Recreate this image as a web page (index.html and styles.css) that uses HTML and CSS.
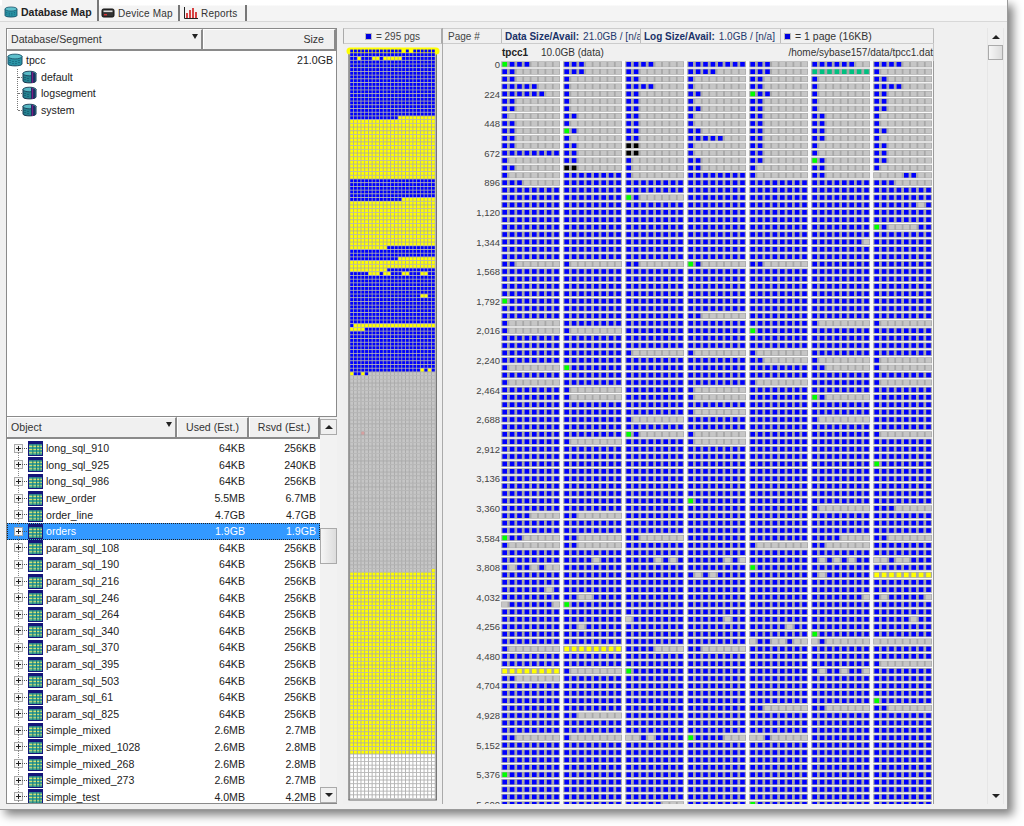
FILE: index.html
```html
<!DOCTYPE html>
<html lang="en">
<head>
<meta charset="utf-8">
<title>Database Map</title>
<link rel="stylesheet" href="styles.css">
</head>
<body>
<svg class="defs" width="0" height="0" aria-hidden="true">
  <symbol id="ic-table" viewBox="0 0 14 14">
    <rect x="0" y="0" width="14" height="14" fill="#15157a"/>
    <rect x="1" y="3" width="12" height="10" fill="#3fa59a"/>
    <path d="M1 5h12M1 8h12M1 11h12" stroke="#d8e070" stroke-width="1"/>
    <path d="M4.5 3v10M8 3v10M11 3v10" stroke="#1d7d72" stroke-width="1"/>
  </symbol>
  <symbol id="ic-db" viewBox="0 0 16 14">
    <path d="M1 3.5C1 1.5 15 1.5 15 3.5V11C15 13.5 1 13.5 1 11Z" fill="#2a93a5" stroke="#1b4f66"/>
    <ellipse cx="8" cy="3.5" rx="7" ry="2.4" fill="#5fc0cc" stroke="#1b4f66" stroke-width=".8"/>
    <path d="M3 7v4M6 8v4M9 8v4M12 7v4" stroke="#17677c" stroke-width="1.4" stroke-dasharray="1 1"/>
  </symbol>
  <symbol id="ic-seg" viewBox="0 0 15 14">
    <path d="M1 3.5C1 1.5 14 1.5 14 3.5V11C14 13.5 1 13.5 1 11Z" fill="#24808f" stroke="#17354e"/>
    <ellipse cx="7.5" cy="3.5" rx="6.5" ry="2.3" fill="#58b8c4" stroke="#17354e" stroke-width=".8"/>
    <path d="M9 1.5L13 3V12L9 13Z" fill="#1c2f63"/>
    <path d="M10.5 2v11" stroke="#7a1f80" stroke-width="1.2"/>
    <path d="M3 7v4M6 8v4" stroke="#14596c" stroke-width="1.4" stroke-dasharray="1 1"/>
  </symbol>
  <symbol id="ic-device" viewBox="0 0 14 12">
    <rect x="1" y="2" width="12" height="8" rx="1.5" fill="#333" stroke="#111"/>
    <rect x="2.5" y="3.5" width="9" height="1.6" fill="#ddd"/>
    <rect x="3" y="7" width="3" height="1.4" fill="#d33"/>
  </symbol>
  <symbol id="ic-chart" viewBox="0 0 14 12">
    <path d="M.5 0V11.5H14" fill="none" stroke="#222"/>
    <path d="M3 11V6M6 11V3M9 11V1M12 11V5" stroke="#d01818" stroke-width="1.6"/>
  </symbol>
</svg>
<div class="window">
  <nav class="tabs">
    <div class="tab tab-active"><svg class="ic-tab"><use href="#ic-db"/></svg>Database Map</div>
    <div class="tab tab-device"><svg class="ic-tab"><use href="#ic-device"/></svg>Device Map</div>
    <div class="tab tab-reports"><svg class="ic-tab"><use href="#ic-chart"/></svg>Reports</div>
  </nav>
  <div class="panes">
    <section class="left">
      <div class="tree-panel">
        <div class="head tree-head">
          <div class="hcell hcell-grow">Database/Segment<i class="sort"></i></div>
          <div class="hcell hcell-size">Size</div>
        </div>
        <div class="tree">
          <div class="tree-row"><svg class="ic-db"><use href="#ic-db"/></svg><span class="grow">tpcc</span><span class="tree-size">21.0GB</span></div>
          <div class="tree-kids">
            <div class="tree-row kid"><svg class="ic-seg"><use href="#ic-seg"/></svg><span>default</span></div>
            <div class="tree-row kid"><svg class="ic-seg"><use href="#ic-seg"/></svg><span>logsegment</span></div>
            <div class="tree-row kid"><svg class="ic-seg"><use href="#ic-seg"/></svg><span>system</span></div>
          </div>
        </div>
      </div>
      <div class="obj-panel">
        <div class="obj-main">
          <div class="head obj-head">
            <div class="hcell hcell-grow">Object<i class="sort"></i></div>
            <div class="hcell hcell-used">Used (Est.)</div>
            <div class="hcell hcell-rsvd">Rsvd (Est.)</div>
          </div>
          <div class="rows">
            <div class="row"><i class="tog"></i><svg class="ic-table"><use href="#ic-table"/></svg><span class="name">long_sql_910</span><span class="num">64KB</span><span class="num">256KB</span></div>
            <div class="row"><i class="tog"></i><svg class="ic-table"><use href="#ic-table"/></svg><span class="name">long_sql_925</span><span class="num">64KB</span><span class="num">240KB</span></div>
            <div class="row"><i class="tog"></i><svg class="ic-table"><use href="#ic-table"/></svg><span class="name">long_sql_986</span><span class="num">64KB</span><span class="num">256KB</span></div>
            <div class="row"><i class="tog"></i><svg class="ic-table"><use href="#ic-table"/></svg><span class="name">new_order</span><span class="num">5.5MB</span><span class="num">6.7MB</span></div>
            <div class="row"><i class="tog"></i><svg class="ic-table"><use href="#ic-table"/></svg><span class="name">order_line</span><span class="num">4.7GB</span><span class="num">4.7GB</span></div>
            <div class="row row-sel"><i class="tog"></i><svg class="ic-table"><use href="#ic-table"/></svg><span class="name">orders</span><span class="num">1.9GB</span><span class="num">1.9GB</span></div>
            <div class="row"><i class="tog"></i><svg class="ic-table"><use href="#ic-table"/></svg><span class="name">param_sql_108</span><span class="num">64KB</span><span class="num">256KB</span></div>
            <div class="row"><i class="tog"></i><svg class="ic-table"><use href="#ic-table"/></svg><span class="name">param_sql_190</span><span class="num">64KB</span><span class="num">256KB</span></div>
            <div class="row"><i class="tog"></i><svg class="ic-table"><use href="#ic-table"/></svg><span class="name">param_sql_216</span><span class="num">64KB</span><span class="num">256KB</span></div>
            <div class="row"><i class="tog"></i><svg class="ic-table"><use href="#ic-table"/></svg><span class="name">param_sql_246</span><span class="num">64KB</span><span class="num">256KB</span></div>
            <div class="row"><i class="tog"></i><svg class="ic-table"><use href="#ic-table"/></svg><span class="name">param_sql_264</span><span class="num">64KB</span><span class="num">256KB</span></div>
            <div class="row"><i class="tog"></i><svg class="ic-table"><use href="#ic-table"/></svg><span class="name">param_sql_340</span><span class="num">64KB</span><span class="num">256KB</span></div>
            <div class="row"><i class="tog"></i><svg class="ic-table"><use href="#ic-table"/></svg><span class="name">param_sql_370</span><span class="num">64KB</span><span class="num">256KB</span></div>
            <div class="row"><i class="tog"></i><svg class="ic-table"><use href="#ic-table"/></svg><span class="name">param_sql_395</span><span class="num">64KB</span><span class="num">256KB</span></div>
            <div class="row"><i class="tog"></i><svg class="ic-table"><use href="#ic-table"/></svg><span class="name">param_sql_503</span><span class="num">64KB</span><span class="num">256KB</span></div>
            <div class="row"><i class="tog"></i><svg class="ic-table"><use href="#ic-table"/></svg><span class="name">param_sql_61</span><span class="num">64KB</span><span class="num">256KB</span></div>
            <div class="row"><i class="tog"></i><svg class="ic-table"><use href="#ic-table"/></svg><span class="name">param_sql_825</span><span class="num">64KB</span><span class="num">256KB</span></div>
            <div class="row"><i class="tog"></i><svg class="ic-table"><use href="#ic-table"/></svg><span class="name">simple_mixed</span><span class="num">2.6MB</span><span class="num">2.7MB</span></div>
            <div class="row"><i class="tog"></i><svg class="ic-table"><use href="#ic-table"/></svg><span class="name">simple_mixed_1028</span><span class="num">2.6MB</span><span class="num">2.8MB</span></div>
            <div class="row"><i class="tog"></i><svg class="ic-table"><use href="#ic-table"/></svg><span class="name">simple_mixed_268</span><span class="num">2.6MB</span><span class="num">2.8MB</span></div>
            <div class="row"><i class="tog"></i><svg class="ic-table"><use href="#ic-table"/></svg><span class="name">simple_mixed_273</span><span class="num">2.6MB</span><span class="num">2.7MB</span></div>
            <div class="row"><i class="tog"></i><svg class="ic-table"><use href="#ic-table"/></svg><span class="name">simple_test</span><span class="num">4.0MB</span><span class="num">4.2MB</span></div>
          </div>
        </div>
        <div class="sbar sbar-list">
          <div class="sbtn"><i class="arrow-up"></i></div>
          <div class="strack strack-a"></div>
          <div class="sthumb sthumb-list"></div>
          <div class="strack"></div>
          <div class="sbtn"><i class="arrow-down"></i></div>
        </div>
      </div>
    </section>
    <section class="mini">
      <div class="mini-head"><i class="swatch"></i> = 295 pgs</div>
      <canvas id="mini" class="mini-map" width="98" height="760"></canvas>
    </section>
    <section class="main">
      <div class="main-head">
        <div class="mh mh-page">Page #</div>
        <div class="mh mh-data"><b>Data Size/Avail:</b> 21.0GB / [n/a]</div>
        <div class="mh mh-log"><b>Log Size/Avail:</b> 1.0GB / [n/a]</div>
        <div class="mh mh-legend"><i class="swatch"></i> = 1 page (16KB)</div>
      </div>
      <div class="main-sub">
        <b class="dev">tpcc1</b><span class="dev-size">10.0GB (data)</span><span class="dev-path">/home/sybase157/data/tpcc1.dat</span>
      </div>
      <div class="main-body">
        <div class="labels">
          <div>0</div><div>224</div><div>448</div><div>672</div><div>896</div><div>1,120</div><div>1,344</div><div>1,568</div><div>1,792</div><div>2,016</div><div>2,240</div><div>2,464</div><div>2,688</div><div>2,912</div><div>3,136</div><div>3,360</div><div>3,584</div><div>3,808</div><div>4,032</div><div>4,256</div><div>4,480</div><div>4,704</div><div>4,928</div><div>5,152</div><div>5,376</div><div>5,600</div>
        </div>
        <canvas id="grid" class="grid" width="433" height="744"></canvas>
      </div>
    </section>
    <div class="sbar sbar-page">
      <div class="sbtn-flat"><i class="arrow-up"></i></div>
      <div class="sthumb sthumb-page"></div>
      <div class="strack"></div>
      <div class="sbtn-flat"><i class="arrow-down"></i></div>
    </div>
  </div>
</div>
<script src="map.js"></script>
</body>
</html>
```
FILE: styles.css
```css
* { box-sizing: border-box; }
html, body { margin: 0; padding: 0; background: #fff; }
body { width: 1024px; height: 826px; overflow: hidden; font-family: "Liberation Sans", "Noto Sans", sans-serif; font-size: 10.6px; color: #222; }
.defs { position: absolute; }
i { display: block; font-style: normal; }

.window { width: 1008px; height: 810px; background: #f0f0f0; border-right: 1px solid #9a9a9a; border-bottom: 1px solid #9a9a9a; box-shadow: 5px 5px 9px rgba(0,0,0,.5); display: flex; flex-direction: column; overflow: hidden; }

.tabs { height: 22px; flex: none; display: flex; align-items: flex-end; padding-left: 2px; background: linear-gradient(#fff 0, #fff 5px, #f4f4f4 6px); border-bottom: 1px solid #d8d8d8; font-size: 10px; color: #333; }
.tab { height: 16px; display: flex; align-items: center; gap: 3px; border-right: 2px solid #777; padding-left: 2px; letter-spacing: .2px; }
.tab-active { width: 97px; height: 21px; padding-top: 3px; font-size: 10.5px; font-weight: 700; background: #f3f3f3; color: #222; letter-spacing: 0; }
.tab-device { width: 81px; }
.tab-reports { width: 67px; padding-left: 4px; }
.ic-tab { width: 14px; height: 12px; flex: none; }

.panes { flex: 1; min-height: 0; display: flex; padding: 6px 3px 5px 6px; }

.left { width: 331px; flex: none; display: flex; flex-direction: column; border-left: 1px solid #8a8a8a; border-bottom: 1px solid #8a8a8a; }
.tree-panel { height: 388px; flex: none; display: flex; flex-direction: column; border-right: 1px solid #8a8a8a; border-top: 1px solid #8a8a8a; }
.head { display: flex; flex: none; height: 22px; background: #f0f0f0; border-bottom: 2px solid #8a8a8a; color: #333; }
.hcell { display: flex; align-items: center; padding: 0 0 2px 3px; border-right: 2px solid #8a8a8a; border-top: 1px solid #fff; border-left: 1px solid #fff; }
.hcell-grow { flex: 1; min-width: 0; justify-content: space-between; padding-right: 3px; }
.hcell-size { width: 133px; justify-content: flex-end; padding-right: 10px; }
.hcell-used { width: 72px; justify-content: center; padding: 0 0 2px; }
.hcell-rsvd { width: 71px; justify-content: center; padding: 0 0 2px; }
.sort { width: 0; height: 0; border-left: 3px solid transparent; border-right: 3px solid transparent; border-top: 5px solid #222; margin-top: -5px; }

.tree { flex: 1; background: #fff; padding-top: 1px; }
.tree-row { height: 16.6px; display: flex; align-items: center; }
.grow { flex: 1; padding-left: 3px; }
.tree-size { padding-right: 3px; }
.ic-db { width: 16px; height: 14px; flex: none; }
.tree-kids { margin-left: 10px; border-left: 1px dotted #777; height: 41px; margin-bottom: 9px; }
.kid { padding-left: 4px; gap: 4px; position: relative; }
.kid::before { content: ""; position: absolute; left: 0; top: 8px; width: 4px; border-top: 1px dotted #777; }
.ic-seg { width: 15px; height: 14px; flex: none; }

.obj-panel { flex: 1; min-height: 0; display: flex; border-top: 1px solid #8a8a8a; }
.obj-main { width: 313px; flex: none; display: flex; flex-direction: column; }
.rows { flex: 1; background: #fff; overflow: hidden; padding-top: 1px; }
.row { height: 16.6px; display: flex; align-items: center; padding-left: 7px; }
.tog { width: 9px; height: 9px; flex: none; position: relative; border: 1px solid #aaa; background: linear-gradient(#222,#222) center/5px 1px no-repeat, linear-gradient(#222,#222) center/1px 5px no-repeat, #f6f6f6; }
.tog::after { content: ""; position: absolute; left: 7px; top: 3px; width: 5px; border-top: 1px dotted #555; }
.tog::before { content: ""; position: absolute; left: 3px; top: 7px; height: 8px; border-left: 1px dotted #888; }
.ic-table { width: 15px; height: 15px; flex: none; margin-left: 5px; }
.name { flex: 1; padding-left: 3px; min-width: 0; white-space: nowrap; }
.num { width: 71px; text-align: right; padding-right: 4px; flex: none; }
.row-sel { background: #3399ff; color: #fff; outline: 1px dotted #222; outline-offset: -1px; }

.sbar { display: flex; flex-direction: column; flex: none; }
.sbar-list { width: 17px; background: #f2f2f2; }
.strack { flex: 1; }
.strack-a { flex: none; height: 93px; }
.sbtn { height: 16px; margin: 2px 0 0 0; display: flex; align-items: center; justify-content: center; background: #f0f0f0; border: 1px solid #aaa; flex: none; }
.sthumb { flex: none; background: linear-gradient(90deg, #f6f6f6, #dcdcdc); border: 1px solid #aaa; }
.sthumb-list { height: 36px; }
.arrow-up { width: 0; height: 0; border-left: 4px solid transparent; border-right: 4px solid transparent; border-bottom: 4px solid #222; }
.arrow-down { width: 0; height: 0; border-left: 4px solid transparent; border-right: 4px solid transparent; border-top: 4px solid #222; }

.mini { width: 99px; margin-left: 6px; flex: none; display: flex; flex-direction: column; }
.mini-head { height: 16px; flex: none; display: flex; align-items: center; justify-content: center; gap: 4px; border-top: 1px solid #ccc; border-bottom: 1px solid #ccc; border-left: 1px solid #aaa; border-right: 1px solid #aaa; color: #444; font-size: 10px; }
.swatch { width: 7px; height: 7px; background: #0000e0; border: 1px solid #bbb; flex: none; }
.mini-map { display: block; width: 98px; height: 760px; }

.main { width: 492px; flex: none; display: flex; flex-direction: column; border-left: 1px solid #aaa; }
.main-head { display: flex; height: 16px; flex: none; border-top: 1px solid #ccc; border-bottom: 1px solid #ccc; color: #1f3a6e; font-size: 10px; }
.mh { display: flex; align-items: center; gap: 4px; padding-left: 3px; border-right: 1px solid #bbb; white-space: nowrap; overflow: hidden; }
.mh b { color: #1a3268; }
.mh-page { width: 59px; padding-left: 5px; color: #444; }
.mh-data { width: 139px; }
.mh-log { width: 140px; }
.mh-legend { flex: 1; color: #333; font-size: 10.5px; }
.main-sub { display: flex; height: 17px; flex: none; align-items: center; padding-left: 59px; font-size: 10px; color: #333; border-right: 1px solid #c8c8c8; }
.dev { font-weight: 700; width: 39px; flex: none; color: #222; }
.dev-size { flex: 1; }
.dev-path { white-space: nowrap; }
.main-body { flex: 1; min-height: 0; display: flex; overflow: hidden; }
.labels { width: 58px; flex: none; margin-top: -3px; text-align: right; color: #444; font-size: 9.5px; }
.labels div { height: 29.6px; line-height: 14px; padding-right: 1px; }
.grid { display: block; width: 433px; height: 744px; }

.sbar-page { width: 17px; margin-left: auto; border-left: 1px solid #e6e6e6; border-right: 1px solid #e6e6e6; align-items: center; }
.sbtn-flat { height: 17px; width: 15px; display: flex; align-items: center; justify-content: center; flex: none; }
.sthumb-page { width: 15px; height: 15px; }
```
FILE: map.js
```js
// Page-map data: per device column, rows that are not fully allocated.
// A number n = n blue pages then free pages; a string gives each page.
var F8='gggggggg',Y8='YYYYYYYY',GF='Gbbbbbbb',GB='Gbgggggg';
var MAP=[
 {0:'Gbbbgggg',1:2,2:2,3:5,4:6,5:2,6:2,7:1,8:2,9:2,10:2,11:2,13:1,14:2,15:1,16:3,27:2,32:GF,35:1,36:1,41:1,43:1,61:4,64:'Gbbggggg',65:1,68:'bgbbgbgg',71:'bbbbbbgb',73:'gbbbbbbg',79:1,82:Y8,83:2,91:2,96:GF},
 {0:3,1:3,2:1,3:1,4:1,5:1,6:1,7:2,8:1,9:GB,10:1,11:2,12:2,13:2,14:'KKgggggg',27:1,36:1,41:GF,44:1,45:1,51:1,61:2,64:2,65:2,67:'bbbbgbbb',72:'bbggbbbb',73:GF,76:'bbgbbbbb',79:Y8,82:1,88:2,91:1},
 {0:4,1:2,2:2,3:4,4:2,5:2,6:2,7:2,8:2,9:2,10:2,11:'KKgggggg',12:'KKgggggg',13:1,14:1,15:1,18:GB,27:2,39:1,48:1,50:GB,64:2,67:'bbbbgbgb',75:'gbbbbbbb',79:4,82:GF,91:'ggbgbbbb',100:'bbbbbggg'},
 {1:4,2:1,3:1,4:2,5:1,6:2,7:1,8:1,9:2,10:5,11:1,12:1,13:2,14:2,27:GB,34:2,39:1,44:1,45:1,47:1,50:1,51:1,59:GF,67:'bbbbbgbg',69:'bgbgbbbb',75:'bbbbbgbb',79:2,91:'Gbbbbggg'},
 {0:3,1:3,2:2,3:2,4:'Gbbggggg',5:2,6:2,7:2,8:2,9:2,10:2,11:2,12:2,13:2,14:1,15:1,27:2,36:GF,39:1,40:2,43:1,65:1,68:GF,76:'bbbbbgbb',78:'gbbggbgg',87:2,91:'ggbggggg',100:GF},
 {0:6,1:'TTTTTTTT',2:1,3:1,4:1,5:1,6:1,7:2,8:2,9:2,10:2,11:1,12:1,13:GB,14:2,15:2,24:'bbbbbbbg',35:1,40:1,41:2,45:GB,48:1,60:1,64:4,65:2,67:'bgbgbgbb',69:'bgbbbbbb',72:'bbbbbbbg',77:GF,78:'gbgggggg',82:'bgbbgbbg',87:2},
 {0:4,1:1,2:2,3:4,4:2,5:2,6:2,7:1,8:1,9:2,10:1,11:2,12:2,13:2,14:1,15:'ggggbbgg',16:3,19:'bbbbbbgb',22:'Gbggggbb',35:1,40:1,41:1,43:1,50:1,54:GF,60:3,64:2,67:'ggbggbbb',69:Y8,72:'bgbbbbbg',75:'bbbbbgbb',78:F8,81:1,86:GF,87:2}
];
var COLORS={b:'#0000ff',g:'#c6c6c6',G:'#00ff00',K:'#000000',Y:'#ffff00',T:'#00c080',w:'#ffffff',r:'#d8a0a0'};

function pageString(v){
  if(v===undefined) return 'bbbbbbbb';
  if(typeof v==='number') return 'bbbbbbbb'.slice(0,v)+F8.slice(v);
  return v;
}

(function drawGrid(){
  var c=document.getElementById('grid').getContext('2d');
  var P=7.4;
  c.fillStyle='#fafafa';
  c.fillRect(0,0,433,744);
  for(var col=0;col<7;col++){
    var x0=62*col;
    for(var r=0;r<=100;r++){
      var s=pageString(MAP[col][r]);
      var y=.3+P*r;
      c.fillStyle='#a8a8a8';
      c.fillRect(x0+.2,y,P*8-.4,6);
      for(var i=0;i<8;i++){
        var x=x0+P*i;
        var k=s.charAt(i);
        c.fillStyle=COLORS[k];
        if(k==='g'){ c.fillRect(x+.9,y+.6,5.6,4.8); }
        else { c.fillRect(x+1.4,y+.7,4.6,4.6); }
      }
    }
  }
  c.fillStyle='#9c9c9c';
  c.fillRect(432,0,1,744);
  c.fillRect(0,743,433,1);
})();

(function drawMini(){
  var c=document.getElementById('mini').getContext('2d');
  var P=3.71, OX=6.85, OY=5.15;
  c.fillStyle='#efefef';
  c.fillRect(0,0,98,760);
  function rep(ch,n){return new Array(n+1).join(ch);}
  function spots(base,idx,ch){var a=rep(base,23).split('');idx.forEach(function(i){a[i]=ch;});return a.join('');}
  function band(r){
    if(r===0) return rep('b',14)+'YbY'+rep('b',6);
    if(r===2) return spots('b',[2,6,7,9,10,11,12,13],'Y');
    if(r===18) return rep('b',13)+rep('Y',10);
    if(r>=19&&r<=34) return rep('Y',23);
    if(r===40) return rep('b',14)+rep('Y',9);
    if(r>=41&&r<=52) return rep('Y',23);
    if(r===53) return rep('Y',10)+rep('b',13);
    if(r===56) return rep('b',13)+rep('Y',10);
    if(r===57||r===58) return rep('Y',23);
    if(r===59) return rep('Y',10)+rep('b',13);
    if(r===60) return spots('b',[5,6,7,9,10,14,15,19,20],'Y');
    if(r===66) return spots('b',[19,20],'Y');
    if(r===74) return 'b'+rep('Y',22);
    if(r===75) return rep('Y',4)+rep('b',19);
    if(r===86) return spots('b',[19,21],'Y');
    if(r===87) return 'YbbYb'+rep('g',18);
    if(r>=88&&r<=140){
      if(r===103) return spots('g',[3],'r');
      if(r===140) return spots('g',[22],'Y');
      return rep('g',23);
    }
    if(r>=141&&r<=189) return rep('Y',23);
    if(r>189) return rep('w',23);
    return rep('b',23);
  }
  // dark side rails
  c.fillStyle='#6a6a6a';
  c.fillRect(5.4,7,1.3,749);
  c.fillRect(92.6,7,1.3,749);
  c.fillRect(5.4,755.5,88.5,1);
  // highlighted first row
  c.fillStyle='#ffff00';
  c.beginPath();
  c.roundRect(3.5,3.5,93,7,3.5);
  c.fill();
  for(var r=0;r<=201;r++){
    var s=band(r), y=OY+P*r;
    if(r>0){ c.fillStyle='#a6a6a6'; c.fillRect(OX,y,P*23,P); }
    for(var i=0;i<23;i++){
      c.fillStyle=COLORS[s.charAt(i)];
      c.fillRect(OX+.4+P*i,y+.4,2.9,2.9);
    }
  }
})();
```
